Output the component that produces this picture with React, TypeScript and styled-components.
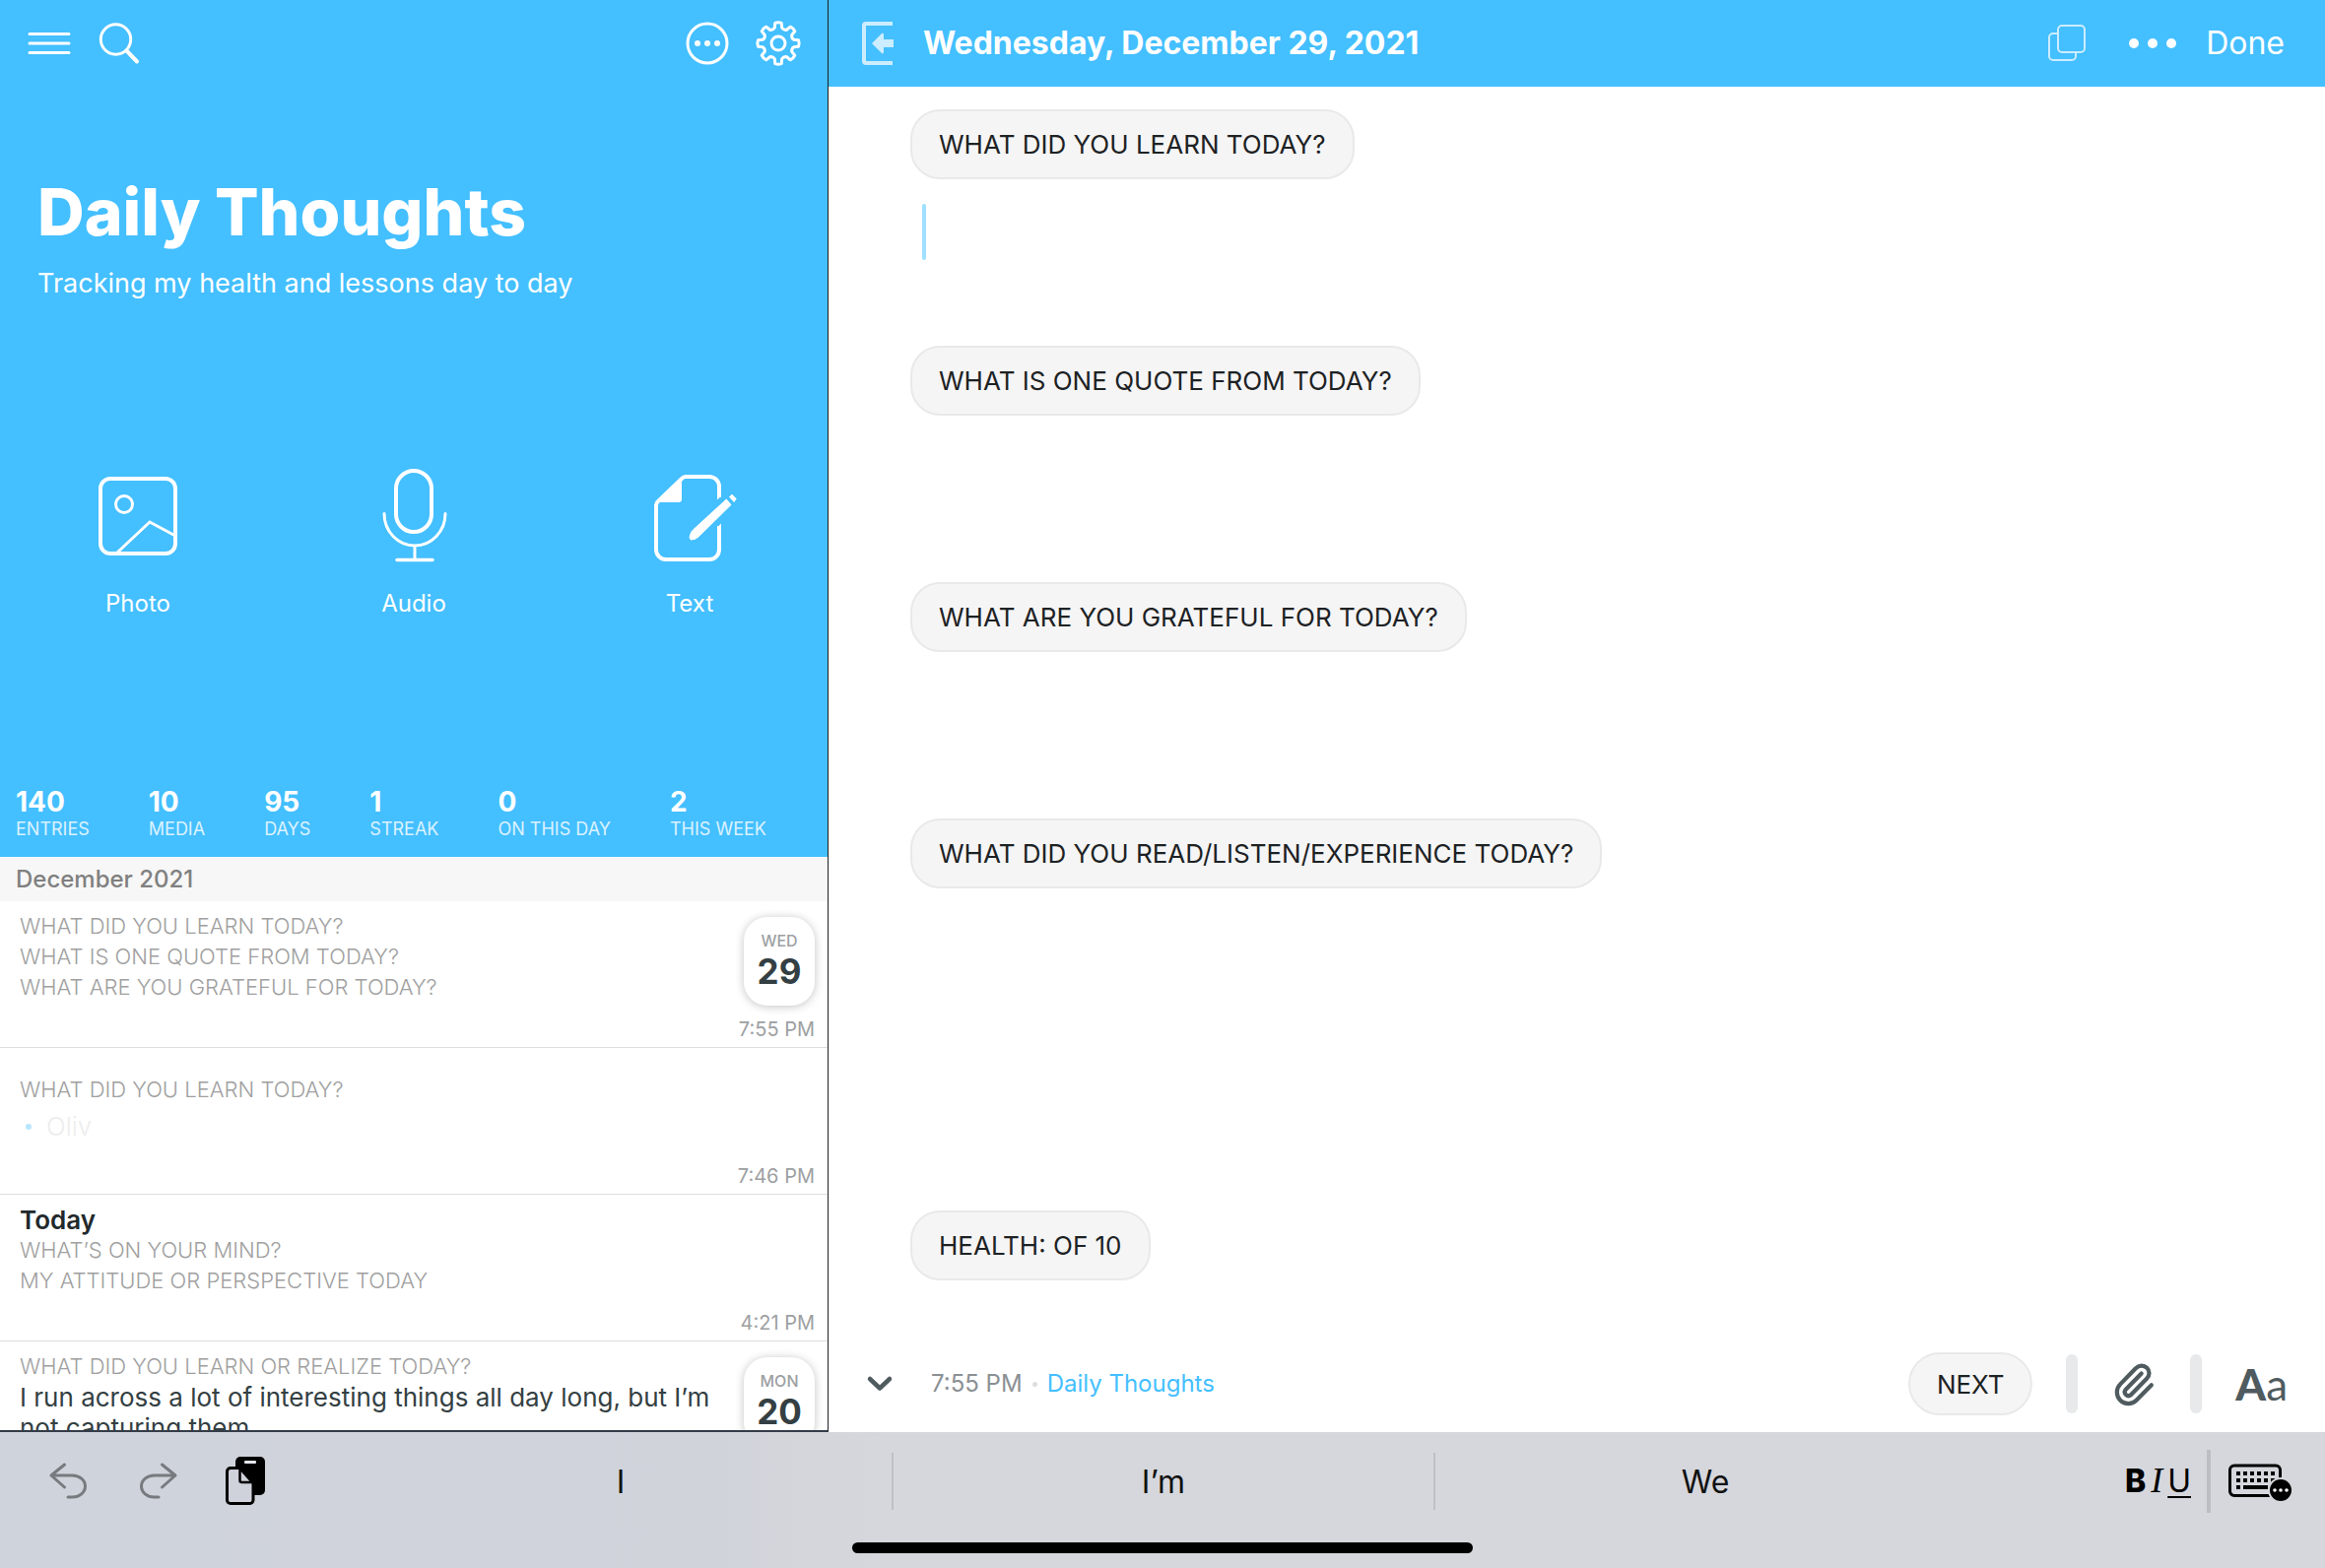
import React from "react";
import styled, { createGlobalStyle } from "styled-components";

const blue = "#44bfff";
const ink = "#343f43";
const slate = "#4f5b5f";
const sans = `Inter, "Liberation Sans", sans-serif`;

const GlobalStyle = createGlobalStyle`
  *, *::before, *::after { box-sizing: border-box; }
  body { margin: 0; font-family: ${sans}; color: ${ink}; background: #fff; }
  h1, h2, h3, p, ul, dl, dd { margin: 0; padding: 0; }
  ul { list-style: none; }
  button { font: inherit; color: inherit; background: none; border: 0; padding: 0; cursor: pointer; }
  svg { display: block; flex: none; }
`;

const Shell = styled.div`
  display: flex;
  flex-direction: column;
  height: 100vh;
`;

const Workspace = styled.div`
  flex: 1;
  min-height: 0;
  display: grid;
  grid-template-columns: minmax(0, 841fr) minmax(0, 1519fr);
`;

/* Journal sidebar */

const Sidebar = styled.aside`
  display: flex;
  flex-direction: column;
  min-height: 0;
  overflow: hidden;
  border-right: 1px solid #1d2022;
  border-bottom: 2px solid #343c48;
`;

const Hero = styled.header`
  flex: none;
  color: #fff;
  background: ${blue};
`;

const HeroBar = styled.div`
  display: flex;
  justify-content: space-between;
  align-items: center;
  height: 88px;
  padding: 0 28px;
`;

const Group = styled.div<{ $gap: number }>`
  display: flex;
  align-items: center;
  gap: ${(p) => p.$gap}px;
`;

const IconButton = styled.button`
  display: grid;
  place-items: center;
`;

const HeroTitle = styled.h1`
  padding: 87px 38px 0;
  font-size: 66px;
  line-height: 80px;
  font-weight: 800;
`;

const HeroSubtitle = styled.p`
  padding: 13px 38px 0;
  font-size: 27px;
  line-height: 40px;
  font-weight: 400;
`;

const Actions = styled.div`
  display: grid;
  grid-template-columns: repeat(3, 1fr);
  margin-top: 165px;
`;

const Action = styled.button`
  display: flex;
  flex-direction: column;
  align-items: center;
  gap: 24px;
  font-size: 24px;
  line-height: 32px;
`;

const Stats = styled.dl`
  display: flex;
  gap: 60px;
  margin-top: 169px;
  padding: 0 16px 16px;
  overflow: hidden;
`;

const Stat = styled.div`
  display: flex;
  flex-direction: column-reverse;
  flex: none;
`;

const StatLabel = styled.dt`
  font-size: 18px;
  line-height: 24px;
  font-weight: 400;
  opacity: 0.8;
`;

const StatValue = styled.dd`
  font-size: 28px;
  line-height: 32px;
  font-weight: 700;
`;

const Month = styled.h2`
  flex: none;
  padding: 0 16px;
  font-size: 24px;
  line-height: 45px;
  font-weight: 500;
  color: #808080;
  background: #f7f7f7;
`;

const Entries = styled.ul`
  flex: 1;
  min-height: 0;
  overflow: hidden;
`;

const Entry = styled.li`
  display: flex;
  justify-content: space-between;
  height: 149px;
  border-bottom: 1px solid #dedede;
`;

const EntryText = styled.div<{ $low?: boolean }>`
  flex: 1;
  padding: ${(p) => (p.$low ? 27 : 10)}px 20px 0;
`;

const Prompt = styled.p`
  font-size: 22px;
  line-height: 31px;
  font-weight: 300;
  color: #a0a0a0;
`;

const EntryTitle = styled.h3`
  font-size: 26px;
  line-height: 31px;
  font-weight: 600;
  color: #22292c;
`;

const Body = styled.p`
  font-size: 26px;
  line-height: 31px;
`;

const Faded = styled.p`
  display: flex;
  align-items: center;
  gap: 15px;
  padding: 2px 6px 0;
  font-size: 26px;
  line-height: 40px;
  font-weight: 300;
  color: #ededed;

  &::before {
    content: "";
    width: 6px;
    height: 6px;
    border-radius: 50%;
    background: #b8e6ff;
  }
`;

const EntrySide = styled.div`
  display: flex;
  flex-direction: column;
  align-items: flex-end;
  padding: 16px 13px 6px 0;
`;

const DayBadge = styled.div`
  display: flex;
  flex-direction: column;
  align-items: center;
  justify-content: center;
  width: 72px;
  height: 90px;
  padding-bottom: 2px;
  border-radius: 24px;
  background: #fff;
  box-shadow: 0 1px 10px rgba(0, 0, 0, 0.24);
`;

const Weekday = styled.span`
  font-size: 16px;
  line-height: 22px;
  font-weight: 500;
  color: #9da0a2;
`;

const DayNumber = styled.span`
  font-size: 35px;
  line-height: 40px;
  font-weight: 700;
  color: ${ink};
`;

const Time = styled.time`
  margin-top: auto;
  font-size: 20px;
  line-height: 24px;
  color: #9da0a2;
`;

/* Editor */

const Editor = styled.main`
  display: flex;
  flex-direction: column;
  min-height: 0;
  min-width: 0;
`;

const EditorBar = styled.header`
  flex: none;
  display: flex;
  align-items: center;
  justify-content: space-between;
  height: 88px;
  padding: 0 41px 0 34px;
  color: #fff;
  background: ${blue};
`;

const DateTitle = styled.h2`
  font-size: 32px;
  line-height: 40px;
  font-weight: 700;
`;

const Done = styled.button`
  font-size: 32px;
  line-height: 40px;
`;

const Page = styled.div`
  flex: 1;
  min-height: 0;
  overflow: hidden;
  padding: 23px 83px 0;
`;

const Question = styled.section`
  display: flex;
  flex-direction: column;
  align-items: flex-start;
`;

const Chip = styled.label`
  padding: 0 27px;
  border: 2px solid #e8e9ea;
  border-radius: 30px;
  background: #f5f5f5;
  color: #1d2224;
  font-size: 26px;
  line-height: 67px;
  font-weight: 400;
  white-space: nowrap;
`;

const AnswerArea = styled.div`
  position: relative;
  align-self: stretch;
`;

const Answer = styled.textarea<{ $tall?: boolean }>`
  display: block;
  width: 100%;
  height: ${(p) => (p.$tall ? 327 : 169)}px;
  padding: 24px 12px;
  border: 0;
  outline: 0;
  resize: none;
  background: transparent;
  font: 400 30px/40px ${sans};
  color: ${ink};
`;

const Caret = styled.span`
  position: absolute;
  top: 25px;
  left: 12px;
  width: 4px;
  height: 57px;
  border-radius: 2px;
  background: #9fdfff;
`;

const Footer = styled.footer`
  flex: none;
  display: flex;
  align-items: center;
  justify-content: space-between;
  height: 98px;
  padding: 0 38px;
`;

const Meta = styled.p`
  display: flex;
  align-items: center;
  gap: 10px;
  font-size: 24px;
  line-height: 32px;
  color: #8b9094;
`;

const MetaDot = styled.span`
  width: 5px;
  height: 5px;
  border-radius: 50%;
  background: #dcdee0;
`;

const JournalLink = styled.a`
  color: ${blue};
  text-decoration: none;
`;

const NextButton = styled.button`
  width: 126px;
  height: 64px;
  border: 2px solid #e8e9ea;
  border-radius: 32px;
  background: #f5f5f5;
  color: #1d2224;
  font-size: 26px;
`;

const Pill = styled.span`
  width: 12px;
  height: 60px;
  border-radius: 6px;
  background: #e7e9ea;
`;

const FontButton = styled.button`
  display: flex;
  align-items: baseline;
  font: 400 44px/48px Lato, ${sans};
  color: ${slate};

  b { font-weight: 900; }
`;

/* Keyboard shortcut bar */

const Keyboard = styled.nav`
  flex: none;
  display: flex;
  flex-direction: column;
  justify-content: space-between;
  align-items: center;
  height: 138px;
  padding: 18px 0 15px;
  background: linear-gradient(90deg, #cfd3db 0%, #d0d3da 30%, #d6d7dc 38%, #d6d7dc 100%);
`;

const KeyRow = styled.div`
  display: grid;
  grid-template-columns: 355px repeat(3, minmax(0, 1fr)) 355px;
  align-items: center;
  align-self: stretch;
`;

const Tools = styled.div`
  display: flex;
  align-items: center;
  gap: 46px;
  padding-left: 48px;
`;

const Suggestion = styled.button`
  height: 58px;
  font-size: 32px;
  color: #111;

  & + & { border-left: 2px solid #bfc0c5; }
`;

const RightTools = styled.div`
  display: flex;
  align-items: center;
  justify-content: flex-end;
  padding-right: 32px;
`;

const FormatButton = styled.button`
  display: flex;
  align-items: baseline;
  gap: 5px;
  margin-right: 16px;
  font-size: 32px;
  line-height: 40px;
  color: #000;

  b { font-weight: 800; }
  i { font-family: "Liberation Serif", serif; font-size: 36px; line-height: 36px; }
  u { text-decoration-thickness: 2px; text-underline-offset: 4px; }
`;

const Bar = styled.span`
  width: 4px;
  height: 64px;
  margin-right: 16px;
  background: #bcbec2;
`;

const HomeBar = styled.div`
  width: 630px;
  height: 11px;
  border-radius: 6px;
  background: #000;
`;

/* Icons */

const line = { fill: "none", stroke: "currentColor", strokeLinecap: "round", strokeLinejoin: "round" } as const;

const MenuIcon = () => (
  <svg width="44" height="44" viewBox="0 0 44 44" {...line} strokeWidth="3">
    <path d="M2 12.500h40M2 22h40M2 31.500h40" />
  </svg>
);

const SearchIcon = () => (
  <svg width="44" height="44" viewBox="0 0 44 44" {...line} strokeWidth="3">
    <circle cx="17.500" cy="18" r="15.200" />
    <path d="M28.500 29.500L39 40.500" strokeWidth="4" />
  </svg>
);

const MoreIcon = () => (
  <svg width="44" height="44" viewBox="0 0 44 44" {...line} strokeWidth="3">
    <circle cx="22" cy="22" r="20" />
    {[12, 22, 32].map((x) => (
      <circle key={x} cx={x} cy="22" r="3" fill="currentColor" stroke="none" />
    ))}
  </svg>
);

const polar = (r: number, deg: number) => {
  const a = (deg * Math.PI) / 180;
  return `${(22 + r * Math.sin(a)).toFixed(2)} ${(22 - r * Math.cos(a)).toFixed(2)}`;
};

const gearPath =
  Array.from({ length: 8 }, (_, i) => {
    const a = i * 45;
    const start = i === 0 ? `M${polar(20.8, a - 9)}` : `L${polar(20.8, a - 9)}`;
    return `${start}Q${polar(21.8, a)} ${polar(20.8, a + 9)}L${polar(16.2, a + 13)}Q${polar(14.2, a + 22.5)} ${polar(16.2, a + 32)}`;
  }).join("") + "Z";

const GearIcon = () => (
  <svg width="44" height="44" viewBox="0 0 44 44" {...line} strokeWidth="3" overflow="visible">
    <path d={gearPath} />
    <circle cx="22" cy="22" r="7" />
  </svg>
);

const PhotoIcon = () => (
  <svg width="96" height="100" viewBox="0 0 96 100" {...line} strokeWidth="4">
    <rect x="10" y="13" width="76" height="76" rx="10" />
    <circle cx="34" cy="39" r="8.500" strokeWidth="3" />
    <path d="M27 88L60 57L86 71" strokeWidth="3" strokeLinejoin="miter" />
  </svg>
);

const AudioIcon = () => (
  <svg width="96" height="100" viewBox="0 0 96 100" {...line} strokeWidth="4">
    <rect x="30" y="5" width="36" height="62" rx="18" />
    <path d="M18 48.500a31 32.500 0 0 0 62 0M49 81v13" strokeWidth="3" />
    <path d="M31 95.500h36" strokeWidth="3.500" />
  </svg>
);

const TextIcon = () => (
  <svg width="96" height="100" viewBox="0 0 96 100" {...line} strokeWidth="4" strokeLinecap="butt">
    <path d="M78 32V21a10 10 0 0 0-10-10H44a5 5 0 0 0-4 2L16 36a6 6 0 0 0-2 4v45a10 10 0 0 0 10 10h44a10 10 0 0 0 10-10V61" />
    <path d="M76 30h4v0.500L76 34.500zM80 58.500V63h-4v-0.500z" fill="currentColor" stroke="none" />
    <path d="M40 12v22q0 3-3 3H15z" fill="currentColor" stroke="none" />
    <path
      d="M85.300 34L90 39.500L57 72Q54 75 49.500 75Q47 74 49 69Q50 66 52 64.500Z"
      fill="currentColor"
      strokeWidth="1"
    />
    <path d="M88.500 31.500L91 29.200L95.200 33.500L93 36.500Z" fill="currentColor" strokeWidth="1" />
  </svg>
);

const CloseEntryIcon = () => (
  <svg width="32" height="44" viewBox="0 0 32 44" opacity="0.720">
    <path d="M31 2H4a2 2 0 0 0-2 2v36a2 2 0 0 0 2 2h27" {...line} strokeWidth="4" strokeLinecap="butt" />
    <path d="M10 22L20.500 11.500q1.500 0 1.500 2V18h10v8H22v4.500q0 2-1.500 2z" fill="currentColor" />
  </svg>
);

const CopyIcon = () => (
  <svg width="38" height="38" viewBox="0 0 38 38" {...line} strokeWidth="2" opacity="0.720">
    <rect x="10" y="1" width="27" height="27" rx="4" />
    <path d="M10 9H5a4 4 0 0 0-4 4v19a4 4 0 0 0 4 4h19a4 4 0 0 0 4-4v-4" />
  </svg>
);

const DotsIcon = () => (
  <svg width="48" height="12" viewBox="0 0 48 12" fill="currentColor">
    {[5, 24, 43].map((x) => (
      <circle key={x} cx={x} cy="6" r="5" />
    ))}
  </svg>
);

const ChevronIcon = () => (
  <svg width="28" height="20" viewBox="0 0 28 20" {...line} stroke={slate} strokeWidth="4.500">
    <path d="M4 5l10 9.500L24 5" />
  </svg>
);

const ClipIcon = () => (
  <svg width="46" height="48" viewBox="0 0 24 25" {...line} stroke={slate} strokeWidth="2.200">
    <path d="M16 7l-8.400 8.600a2 2 0 0 0 2.800 2.800l8.400-8.600a4 4 0 1 0-5.700-5.600L4.800 12.700a6 6 0 1 0 8.500 8.500l8-8" />
  </svg>
);

const undoPath = "M17.500 7L4 18L17.500 30M4 18H25.500a13 11 0 0 1 0 22H21";

const UndoIcon = () => (
  <svg width="44" height="48" viewBox="0 0 44 48" {...line} stroke="#777b7f" strokeWidth="3">
    <path d={undoPath} />
  </svg>
);

const RedoIcon = () => (
  <svg width="44" height="48" viewBox="0 0 44 48" {...line} stroke="#777b7f" strokeWidth="3">
    <path d={undoPath} transform="matrix(-1 0 0 1 44 0)" />
  </svg>
);

const PasteIcon = () => (
  <svg width="42" height="50" viewBox="0 0 42 50">
    <rect x="11" y="0" width="30" height="39" rx="5" fill="#000" />
    <rect x="20" y="4" width="12" height="3" rx="1" fill="#e4e6ea" />
    <path
      d="M6 11.500h9.500L29 26v18a3.500 3.500 0 0 1-3.500 3.500H6A3.500 3.500 0 0 1 2.500 44V15A3.500 3.500 0 0 1 6 11.500z"
      fill="#cfd2da"
      stroke="#000"
      strokeWidth="3"
    />
    <path d="M15.500 12v12a2 2 0 0 0 2 2H28z" fill="#cfd2da" stroke="#000" strokeWidth="2.500" />
  </svg>
);

const KeyboardIcon = () => (
  <svg width="68" height="44" viewBox="0 0 68 44">
    <rect x="3.500" y="6" width="51" height="30.500" rx="4.500" fill="none" stroke="#000" strokeWidth="3" />
    {[14, 21].map((y) =>
      [0, 1, 2, 3, 4, 5].map((i) => <rect key={`${y}-${i}`} x={10 + i * 7} y={y - 2} width="4" height="4" />)
    )}
    <rect x="10" y="26" width="4" height="4" />
    <rect x="17" y="26" width="25" height="4" />
    <circle cx="55" cy="31" r="13" fill="#d6d7dc" />
    <circle cx="55" cy="31" r="11" />
    {[49, 55, 61].map((x) => (
      <circle key={x} cx={x} cy="31" r="1.800" fill="#fff" />
    ))}
  </svg>
);

/* Content */

const stats = [
  ["140", "ENTRIES"],
  ["10", "MEDIA"],
  ["95", "DAYS"],
  ["1", "STREAK"],
  ["0", "ON THIS DAY"],
  ["2", "THIS WEEK"],
];

const questions = [
  { text: "WHAT DID YOU LEARN TODAY?", active: true },
  { text: "WHAT IS ONE QUOTE FROM TODAY?" },
  { text: "WHAT ARE YOU GRATEFUL FOR TODAY?" },
  { text: "WHAT DID YOU READ/LISTEN/EXPERIENCE TODAY?", tall: true },
  { text: "HEALTH: OF 10" },
];

const Badge = ({ weekday, day }: { weekday: string; day: string }) => (
  <DayBadge>
    <Weekday>{weekday}</Weekday>
    <DayNumber>{day}</DayNumber>
  </DayBadge>
);

export default function App() {
  return (
    <Shell>
      <GlobalStyle />
      <Workspace>
        <Sidebar>
          <Hero>
            <HeroBar>
              <Group $gap={28}>
                <IconButton aria-label="Menu"><MenuIcon /></IconButton>
                <IconButton aria-label="Search"><SearchIcon /></IconButton>
              </Group>
              <Group $gap={28}>
                <IconButton aria-label="More"><MoreIcon /></IconButton>
                <IconButton aria-label="Settings"><GearIcon /></IconButton>
              </Group>
            </HeroBar>
            <HeroTitle>Daily Thoughts</HeroTitle>
            <HeroSubtitle>Tracking my health and lessons day to day</HeroSubtitle>
            <Actions>
              <Action><PhotoIcon />Photo</Action>
              <Action><AudioIcon />Audio</Action>
              <Action><TextIcon />Text</Action>
            </Actions>
            <Stats>
              {stats.map(([value, label]) => (
                <Stat key={label}>
                  <StatLabel>{label}</StatLabel>
                  <StatValue>{value}</StatValue>
                </Stat>
              ))}
            </Stats>
          </Hero>
          <Month>December 2021</Month>
          <Entries>
            <Entry>
              <EntryText>
                <Prompt>WHAT DID YOU LEARN TODAY?</Prompt>
                <Prompt>WHAT IS ONE QUOTE FROM TODAY?</Prompt>
                <Prompt>WHAT ARE YOU GRATEFUL FOR TODAY?</Prompt>
              </EntryText>
              <EntrySide>
                <Badge weekday="WED" day="29" />
                <Time>7:55 PM</Time>
              </EntrySide>
            </Entry>
            <Entry>
              <EntryText $low>
                <Prompt>WHAT DID YOU LEARN TODAY?</Prompt>
                <Faded>Oliv</Faded>
              </EntryText>
              <EntrySide>
                <Time>7:46 PM</Time>
              </EntrySide>
            </Entry>
            <Entry>
              <EntryText>
                <EntryTitle>Today</EntryTitle>
                <Prompt>WHAT’S ON YOUR MIND?</Prompt>
                <Prompt>MY ATTITUDE OR PERSPECTIVE TODAY</Prompt>
              </EntryText>
              <EntrySide>
                <Time>4:21 PM</Time>
              </EntrySide>
            </Entry>
            <Entry>
              <EntryText>
                <Prompt>WHAT DID YOU LEARN OR REALIZE TODAY?</Prompt>
                <Body>I run across a lot of interesting things all day long, but I’m not capturing them</Body>
              </EntryText>
              <EntrySide>
                <Badge weekday="MON" day="20" />
              </EntrySide>
            </Entry>
          </Entries>
        </Sidebar>

        <Editor>
          <EditorBar>
            <Group $gap={30}>
              <IconButton aria-label="Close entry"><CloseEntryIcon /></IconButton>
              <DateTitle>Wednesday, December 29, 2021</DateTitle>
            </Group>
            <Group $gap={44}>
              <IconButton aria-label="Copy"><CopyIcon /></IconButton>
              <Group $gap={30}>
                <IconButton aria-label="More options"><DotsIcon /></IconButton>
                <Done>Done</Done>
              </Group>
            </Group>
          </EditorBar>
          <Page>
            {questions.map(({ text, active, tall }, i) => (
              <Question key={text}>
                <Chip htmlFor={`answer-${i}`}>{text}</Chip>
                <AnswerArea>
                  <Answer id={`answer-${i}`} $tall={tall} />
                  {active && <Caret />}
                </AnswerArea>
              </Question>
            ))}
          </Page>
          <Footer>
            <Group $gap={38}>
              <IconButton aria-label="Collapse"><ChevronIcon /></IconButton>
              <Meta>
                <time>7:55 PM</time>
                <MetaDot />
                <JournalLink href="#journal">Daily Thoughts</JournalLink>
              </Meta>
            </Group>
            <Group $gap={34}>
              <NextButton>NEXT</NextButton>
              <Pill />
              <IconButton aria-label="Attach"><ClipIcon /></IconButton>
              <Pill />
              <FontButton aria-label="Text style"><b>A</b>a</FontButton>
            </Group>
          </Footer>
        </Editor>
      </Workspace>

      <Keyboard aria-label="Keyboard shortcuts">
        <KeyRow>
          <Tools>
            <IconButton aria-label="Undo"><UndoIcon /></IconButton>
            <IconButton aria-label="Redo"><RedoIcon /></IconButton>
            <IconButton aria-label="Paste"><PasteIcon /></IconButton>
          </Tools>
          <Suggestion>I</Suggestion>
          <Suggestion>I’m</Suggestion>
          <Suggestion>We</Suggestion>
          <RightTools>
            <FormatButton aria-label="Format"><b>B</b><i>I</i><u>U</u></FormatButton>
            <Bar />
            <IconButton aria-label="Keyboard options"><KeyboardIcon /></IconButton>
          </RightTools>
        </KeyRow>
        <HomeBar />
      </Keyboard>
    </Shell>
  );
}
